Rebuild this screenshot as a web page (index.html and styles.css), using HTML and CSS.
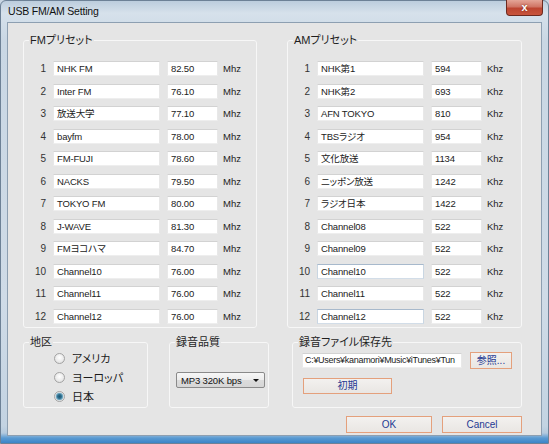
FILE: index.html
```html
<!DOCTYPE html>
<html lang="ja">
<head>
<meta charset="utf-8">
<title>USB FM/AM Setting</title>
<link rel="stylesheet" href="styles.css">
</head>
<body>
<div class="window">
  <div class="titlebar">
    <span class="title">USB FM/AM Setting</span>
    <span class="close">x</span>
  </div>
  <div class="client">
    <div class="presets">
      <fieldset class="group preset fm">
        <legend>FMプリセット</legend>
        <div class="rows">
          <div class="row"><span class="num">1</span><span class="box">NHK FM</span><span class="box">82.50</span><span class="unit">Mhz</span></div>
          <div class="row"><span class="num">2</span><span class="box">Inter FM</span><span class="box">76.10</span><span class="unit">Mhz</span></div>
          <div class="row"><span class="num">3</span><span class="box">放送大学</span><span class="box">77.10</span><span class="unit">Mhz</span></div>
          <div class="row"><span class="num">4</span><span class="box">bayfm</span><span class="box">78.00</span><span class="unit">Mhz</span></div>
          <div class="row"><span class="num">5</span><span class="box">FM-FUJI</span><span class="box">78.60</span><span class="unit">Mhz</span></div>
          <div class="row"><span class="num">6</span><span class="box">NACKS</span><span class="box">79.50</span><span class="unit">Mhz</span></div>
          <div class="row"><span class="num">7</span><span class="box">TOKYO FM</span><span class="box">80.00</span><span class="unit">Mhz</span></div>
          <div class="row"><span class="num">8</span><span class="box">J-WAVE</span><span class="box">81.30</span><span class="unit">Mhz</span></div>
          <div class="row"><span class="num">9</span><span class="box">FMヨコハマ</span><span class="box">84.70</span><span class="unit">Mhz</span></div>
          <div class="row"><span class="num">10</span><span class="box">Channel10</span><span class="box">76.00</span><span class="unit">Mhz</span></div>
          <div class="row"><span class="num">11</span><span class="box">Channel11</span><span class="box">76.00</span><span class="unit">Mhz</span></div>
          <div class="row"><span class="num">12</span><span class="box">Channel12</span><span class="box">76.00</span><span class="unit">Mhz</span></div>
        </div>
      </fieldset>
      <fieldset class="group preset am">
        <legend>AMプリセット</legend>
        <div class="rows">
          <div class="row"><span class="num">1</span><span class="box">NHK第1</span><span class="box">594</span><span class="unit">Khz</span></div>
          <div class="row"><span class="num">2</span><span class="box">NHK第2</span><span class="box">693</span><span class="unit">Khz</span></div>
          <div class="row"><span class="num">3</span><span class="box">AFN TOKYO</span><span class="box">810</span><span class="unit">Khz</span></div>
          <div class="row"><span class="num">4</span><span class="box">TBSラジオ</span><span class="box">954</span><span class="unit">Khz</span></div>
          <div class="row"><span class="num">5</span><span class="box">文化放送</span><span class="box">1134</span><span class="unit">Khz</span></div>
          <div class="row"><span class="num">6</span><span class="box">ニッポン放送</span><span class="box">1242</span><span class="unit">Khz</span></div>
          <div class="row"><span class="num">7</span><span class="box">ラジオ日本</span><span class="box">1422</span><span class="unit">Khz</span></div>
          <div class="row"><span class="num">8</span><span class="box">Channel08</span><span class="box">522</span><span class="unit">Khz</span></div>
          <div class="row"><span class="num">9</span><span class="box">Channel09</span><span class="box">522</span><span class="unit">Khz</span></div>
          <div class="row"><span class="num">10</span><span class="box hot">Channel10</span><span class="box">522</span><span class="unit">Khz</span></div>
          <div class="row"><span class="num">11</span><span class="box">Channel11</span><span class="box">522</span><span class="unit">Khz</span></div>
          <div class="row"><span class="num">12</span><span class="box hot">Channel12</span><span class="box">522</span><span class="unit">Khz</span></div>
        </div>
      </fieldset>
    </div>

    <div class="bottom">
      <fieldset class="group region">
        <legend>地区</legend>
        <div class="radios">
          <div class="radio-row"><span class="radio"></span><span>アメリカ</span></div>
          <div class="radio-row"><span class="radio"></span><span>ヨーロッパ</span></div>
          <div class="radio-row"><span class="radio checked"></span><span>日本</span></div>
        </div>
      </fieldset>
      <fieldset class="group quality">
        <legend>録音品質</legend>
        <div class="select"><span>MP3 320K bps</span><span class="arrow"></span></div>
      </fieldset>
      <fieldset class="group savedir">
        <legend>録音ファイル保存先</legend>
        <div class="path-row">
          <span class="box path">C:¥Users¥kanamori¥Music¥iTunes¥Tun</span>
          <span class="btn browse">参照...</span>
        </div>
        <span class="btn reset">初期</span>
      </fieldset>
    </div>

    <div class="actions">
      <span class="btn ok">OK</span>
      <span class="btn cancel">Cancel</span>
    </div>
  </div>
</div>
</body>
</html>
```

FILE: styles.css
```css
* { box-sizing: border-box; }
html, body { margin: 0; padding: 0; }
body {
  width: 549px;
  height: 444px;
  overflow: hidden;
  font-family: "Liberation Sans", "Noto Sans CJK JP", sans-serif;
  font-feature-settings: "palt";
  font-size: 11px;
  color: #1a1a1a;
  background: #c9d6e3;
}

.window {
  width: 549px;
  height: 444px;
  display: flex;
  flex-direction: column;
  border: 1px solid #6d8196;
  border-radius: 6px 6px 0 0;
  background: linear-gradient(to bottom, #bccddd 0, #d6e1eb 12px, #c9d7e4 40px, #cfdbe7 300px, #c3d3e2 425px, #b4cade 432px, #5a9ad2 437px, #2f7cc4 444px);
}

.titlebar {
  height: 21px;
  display: flex;
  justify-content: space-between;
  align-items: flex-start;
  padding-left: 7px;
}
.title {
  font-size: 10.5px;
  line-height: 20px;
  color: #111;
  letter-spacing: -0.2px;
}
.close {
  width: 37px;
  height: 16px;
  margin-top: -1px;
  margin-right: 5px;
  border: 1px solid #6d2a1f;
  border-top: none;
  border-radius: 0 0 4px 4px;
  background: linear-gradient(to bottom, #e4a597 0, #d07565 45%, #bd4531 55%, #c8553c 100%);
  color: #fff;
  font-weight: bold;
  font-size: 11px;
  line-height: 14px;
  text-align: center;
  text-shadow: 0 0 2px #6b1d10;
}

.client {
  margin: 0 6px 0 6px;
  height: 414px;
  border: 1px solid #8d9fb1;
  background: #e5e5e5;
  display: flex;
  flex-direction: column;
}

.group {
  margin: 0;
  padding: 0;
  min-width: 0;
  border: 1px solid #f7f7f7;
  border-radius: 3px;
}
.group legend {
  margin-left: 5px;
  padding: 0 1px;
  font-size: 11px;
  line-height: 13px;
  color: #1e1e1e;
}

.presets {
  display: flex;
  margin-top: 10.5px;
  padding-left: 15px;
}
.fm { width: 234px; }
.am { width: 235px; margin-left: 30px; }

.rows { padding-top: 10.75px; }
.row {
  display: grid;
  grid-template-columns: 22px 107px 51px auto;
  column-gap: 7px;
  height: 22.5px;
  align-items: center;
}
.num {
  text-align: right;
  font-size: 10px;
  color: #333;
}
.box {
  display: block;
  height: 15px;
  background: #fff;
  border: 1px solid;
  border-color: #d2d2d2 #e8e8e8 #eeeeee #e8e8e8;
  padding: 0 3px;
  font-size: 9.5px;
  letter-spacing: -0.15px;
  line-height: 13px;
  white-space: nowrap;
  overflow: hidden;
  color: #222;
}
.box.hot { border-color: #a7b9cc #c9d6e2 #d2dde8 #c9d6e2; }
.unit {
  margin-left: -2px;
  font-size: 9.5px;
  color: #222;
}

.bottom {
  display: flex;
  margin-top: 7.25px;
  padding-left: 15px;
}
.region { width: 125px; height: 72.5px; }
.quality { width: 100px; height: 72.5px; margin-left: 21px; }
.savedir { width: 230px; height: 72.5px; margin-left: 23px; }

.radios {
  display: flex;
  flex-direction: column;
  padding-left: 30px;
}
.radio-row {
  display: flex;
  align-items: center;
  height: 19px;
  font-size: 11px;
}
.radio {
  width: 11px;
  height: 11px;
  border-radius: 50%;
  border: 1px solid #a3a3a3;
  background: radial-gradient(circle at 50% 40%, #ffffff 0, #e9e9e9 60%, #d6d6d6 100%);
  margin-right: 7px;
}
.radio.checked {
  background: radial-gradient(circle at 50% 50%, #1f5570 0, #2f7191 2px, #86b6cc 3.5px, #eaeaea 4.2px, #d8d8d8 100%);
}

.select {
  margin: 23.5px 0 0 6px;
  width: 89px;
  height: 16px;
  border: 1px solid #8a8a8a;
  border-radius: 2px;
  background: linear-gradient(to bottom, #f7f7f7 0, #ececec 50%, #dcdcdc 51%, #d6d6d6 100%);
  display: flex;
  align-items: center;
  justify-content: space-between;
  padding: 0 5px 0 4px;
  font-size: 9.5px;
  letter-spacing: -0.15px;
  color: #111;
}
.arrow {
  width: 0;
  height: 0;
  border-left: 3px solid transparent;
  border-right: 3px solid transparent;
  border-top: 3px solid #111;
}

.path-row {
  display: flex;
  align-items: center;
  margin: 3.5px 0 0 9px;
  height: 17px;
}
.path {
  flex: 0 0 160px;
  width: 160px;
  font-size: 9px;
  letter-spacing: -0.3px;
  padding: 0 2px;
}

.btn {
  display: block;
  flex: none;
  border: 1px solid #e4a07c;
  background: linear-gradient(to bottom, #f3f1ef 0, #e9e6e3 100%);
  color: #1f3a93;
  font-size: 10px;
  text-align: center;
  line-height: 15px;
}
.browse { width: 42px; height: 17px; margin-left: 8px; }
.reset { width: 89px; height: 16px; margin: 9px 0 0 10px; line-height: 14px; }

.actions {
  display: flex;
  justify-content: flex-end;
  margin-top: 8px;
  padding-right: 19px;
}
.ok { width: 86px; height: 17px; }
.cancel { width: 80px; height: 17px; margin-left: 10px; }
```
